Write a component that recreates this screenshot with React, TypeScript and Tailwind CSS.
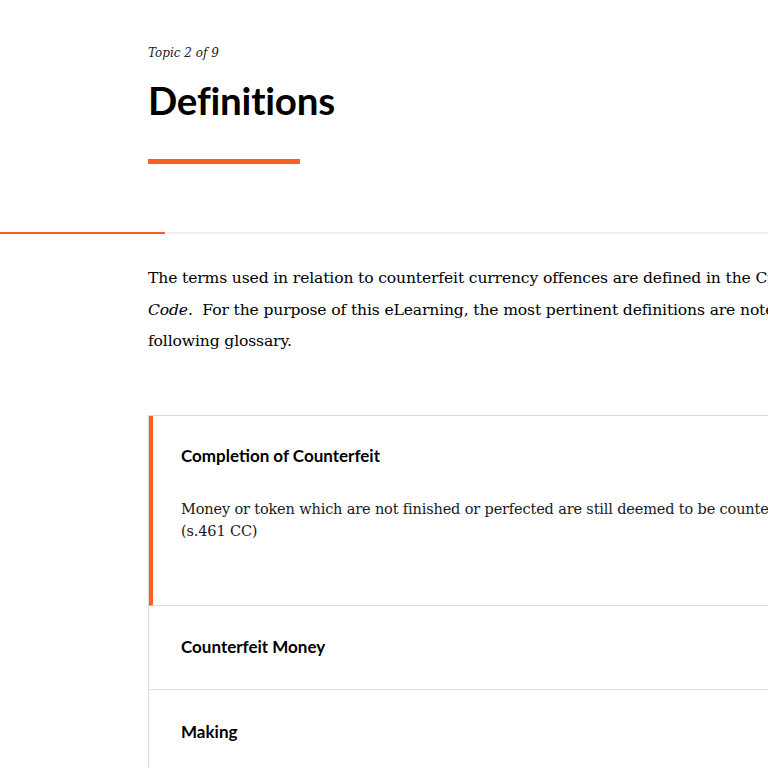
import React from "react";

const serif = { fontFamily: '"DejaVu Serif", "Liberation Serif", serif' };

export default function App() {
  return (
    <div className="min-h-[768px] w-[768px] overflow-hidden bg-white text-[#111]" style={{ fontFamily: 'Lato, "Noto Sans", sans-serif' }}>
      <div className="pl-[148px] pt-[45px]">
        <div className="italic text-[12px] leading-[16px] text-[#222]" style={serif}>Topic 2 of 9</div>
        <h1 className="mt-[16px] text-[38.5px] leading-[46px] font-bold text-black tracking-[-0.2px]">Definitions</h1>
        <div className="mt-[36px] h-[5px] w-[152px] bg-[#fa6120]" />
      </div>
      <div className="mt-[68px] relative h-[2px] w-full bg-[#efefef]">
        <div className="h-[2px] w-[165px] bg-[#fa6120]" />
      </div>
      <div className="pl-[148px] w-[1000px]">
        <p className="mt-[29px] whitespace-nowrap text-[15.6px] leading-[31.5px] tracking-[-0.15px] text-[#000]" style={serif}>
          The terms used in relation to counterfeit currency offences are defined in the Criminal
          <br />
          <em>Code</em>.&nbsp; For the purpose of this eLearning, the most pertinent definitions are noted in the
          <br />
          following glossary.
        </p>
        <div className="mt-[57px] w-[800px] border border-[#dcdcdc] border-r-0">
          <div className="border-l-[4px] border-[#fa6120] border-b border-b-[#dcdcdc] pl-[28px] pt-[28px] h-[190px]">
            <div className="text-[17px] leading-[24px] font-bold text-black">Completion of Counterfeit</div>
            <p className="mt-[30px] whitespace-nowrap text-[14.5px] leading-[22.5px] tracking-[-0.15px] text-[#1a1a1a]" style={serif}>
              Money or token which are not finished or perfected are still deemed to be counterfeit.
              <br />
              (s.461 CC)
            </p>
          </div>
          <div className="border-b border-[#dcdcdc] pl-[32px] h-[84px] flex items-center">
            <div className="text-[17px] leading-[24px] font-bold text-black">Counterfeit Money</div>
          </div>
          <div className="pl-[32px] h-[84px] flex items-center">
            <div className="text-[17px] leading-[24px] font-bold text-black">Making</div>
          </div>
        </div>
      </div>
    </div>
  );
}
